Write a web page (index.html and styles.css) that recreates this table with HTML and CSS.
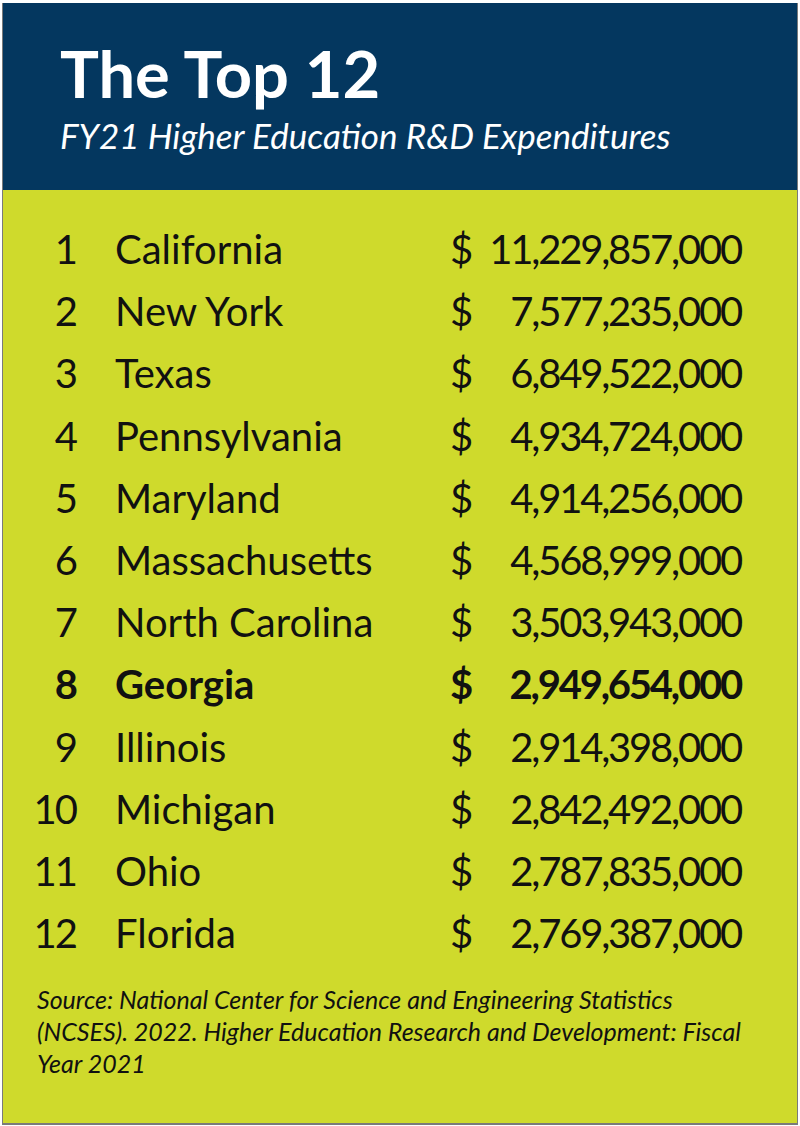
FILE: index.html
```html
<!DOCTYPE html>
<html>
<head>
<meta charset="utf-8">
<link rel="stylesheet" href="styles.css">
</head>
<body>
<div class="card">
  <header class="head">
    <h1 class="title">The Top 12</h1>
    <p class="subtitle">FY21 Higher Education R&amp;D Expenditures</p>
  </header>
  <main class="body">
    <div class="table">
      <div class="row"><span class="rank">1</span><span class="name">California</span><span class="cur">$</span><span class="amt">11,229,857,000</span></div>
      <div class="row"><span class="rank">2</span><span class="name">New York</span><span class="cur">$</span><span class="amt">7,577,235,000</span></div>
      <div class="row"><span class="rank">3</span><span class="name">Texas</span><span class="cur">$</span><span class="amt">6,849,522,000</span></div>
      <div class="row"><span class="rank">4</span><span class="name">Pennsylvania</span><span class="cur">$</span><span class="amt">4,934,724,000</span></div>
      <div class="row"><span class="rank">5</span><span class="name">Maryland</span><span class="cur">$</span><span class="amt">4,914,256,000</span></div>
      <div class="row"><span class="rank">6</span><span class="name">Massachusetts</span><span class="cur">$</span><span class="amt">4,568,999,000</span></div>
      <div class="row"><span class="rank">7</span><span class="name">North Carolina</span><span class="cur">$</span><span class="amt">3,503,943,000</span></div>
      <div class="row hl"><span class="rank">8</span><span class="name">Georgia</span><span class="cur">$</span><span class="amt">2,949,654,000</span></div>
      <div class="row"><span class="rank">9</span><span class="name">Illinois</span><span class="cur">$</span><span class="amt">2,914,398,000</span></div>
      <div class="row"><span class="rank">10</span><span class="name">Michigan</span><span class="cur">$</span><span class="amt">2,842,492,000</span></div>
      <div class="row"><span class="rank">11</span><span class="name">Ohio</span><span class="cur">$</span><span class="amt">2,787,835,000</span></div>
      <div class="row"><span class="rank">12</span><span class="name">Florida</span><span class="cur">$</span><span class="amt">2,769,387,000</span></div>
    </div>
    <p class="source">Source: National Center for Science and Engineering Statistics<br>(NCSES). 2022. Higher Education Research and Development: Fiscal<br>Year 2021</p>
  </main>
</div>
</body>
</html>
```
FILE: styles.css
```css
html, body {
  margin: 0;
  padding: 0;
  background: #ffffff;
}
body {
  font-family: Lato, "Source Sans Pro", "Liberation Sans", sans-serif;
  color: #111111;
}
.card {
  margin: 3px 0 0 2px;
  width: 794px;
  height: 1120px;
  border-left: 1px solid #7a7a7a;
  border-right: 1px solid #7a7a7a;
  border-bottom: 2px solid #7a7a7a;
  background: #cfda2c;
  display: flex;
  flex-direction: column;
}
.head {
  background: #04375f;
  height: 187px;
  padding: 0 0 0 57px;
  box-sizing: border-box;
  color: #ffffff;
}
.title {
  margin: 0;
  padding-top: 34px;
  font-size: 65px;
  font-weight: 700;
  line-height: 72px;
  letter-spacing: 0;
}
.subtitle {
  margin: 4px 0 0;
  font-size: 35px;
  font-style: italic;
  font-weight: 400;
  line-height: 44px;
}
.body {
  padding: 28px 58px 0 27px;
}
.table {
  display: flex;
  flex-direction: column;
}
.row {
  display: grid;
  grid-template-columns: 48px 1fr 20px 269px;
  align-items: center;
  height: 62.2px;
  font-size: 40px;
  line-height: 62px;
}
.rank {
  text-align: right;
  letter-spacing: -2px;
  padding-right: 2px;
}
.name {
  padding-left: 37px;
  white-space: nowrap;
}
.cur {
  text-align: left;
}
.amt {
  text-align: right;
  white-space: nowrap;
  letter-spacing: -2.2px;
  margin-right: -2px;
}
.hl {
  font-weight: 700;
}
.source {
  margin: 19px 0 0 7px;
  font-size: 25px;
  font-style: italic;
  line-height: 32px;
  white-space: nowrap;
}
```
